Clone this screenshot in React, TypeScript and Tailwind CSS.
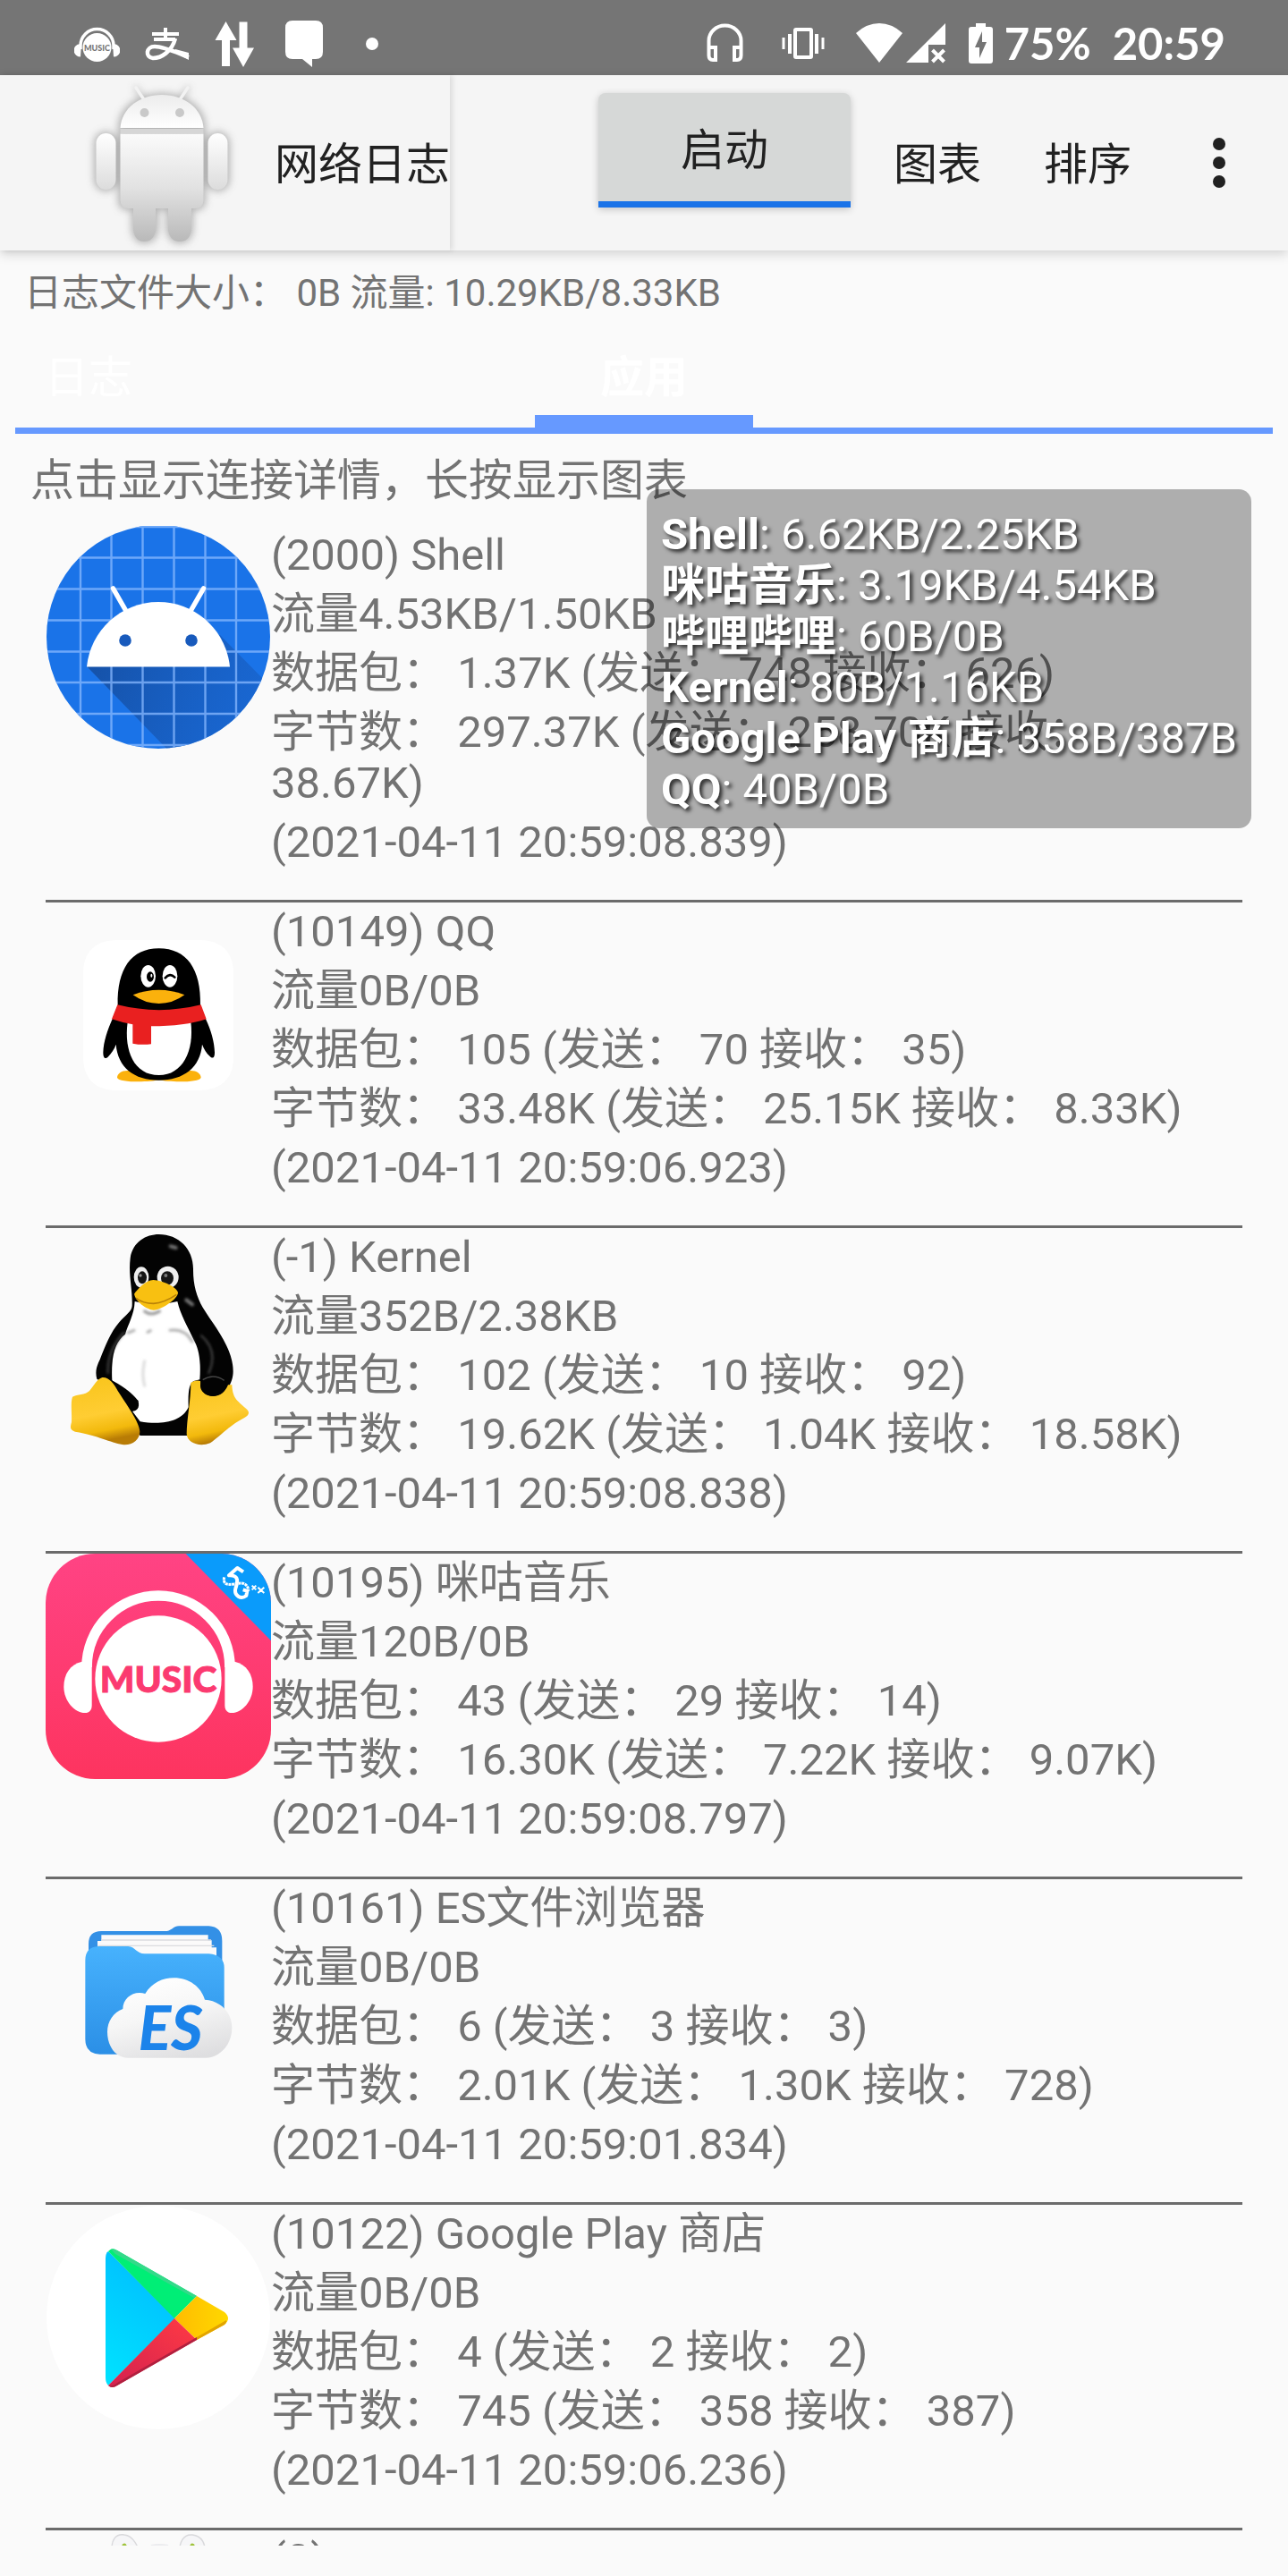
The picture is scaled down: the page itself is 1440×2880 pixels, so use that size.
import React from "react";

const ICON = "block h-[252px] w-[252px]";

function ShellIcon() {
  return (
    <svg viewBox="0 0 252 252" className={ICON} aria-hidden="true">
      <defs>
        <clipPath id="shell-disc">
          <circle cx="126" cy="124" r="125" />
        </clipPath>
        <linearGradient id="shell-shade" x1="60" y1="150" x2="240" y2="230" gradientUnits="userSpaceOnUse">
          <stop offset="0" stopColor="#154fa3" stopOpacity="0.9" />
          <stop offset="1" stopColor="#185fc4" stopOpacity="0.55" />
        </linearGradient>
      </defs>
      <g clipPath="url(#shell-disc)">
        <rect width="252" height="252" fill="#1a73e8" />
        <path d="M46 157L142 256H252V180L195 122Z" fill="url(#shell-shade)" />
        <path
          d="M39 0V252M73.5 0V252M108.5 0V252M143.5 0V252M178.5 0V252M213 0V252M0 1H252M0 35.5H252M0 70.5H252M0 105.5H252M0 140.5H252M0 175H252M0 210H252M0 245H252"
          stroke="#8ab9ff"
          strokeOpacity="0.75"
          strokeWidth="2.4"
        />
      </g>
      <path d="M46 157.500C50 117 84 85 126 85C168 85 202 117 206 157.500Z" fill="#fff" />
      <path d="M75.500 70L91 97M176.500 70L161 97" stroke="#fff" strokeWidth="5.500" strokeLinecap="round" />
      <circle cx="89" cy="128" r="6.800" fill="#185abc" />
      <circle cx="163" cy="128" r="6.800" fill="#185abc" />
    </svg>
  );
}

function QQIcon() {
  return (
    <svg viewBox="153 27 756 756" className={ICON} aria-hidden="true">
      <path
        d="M395 153H667C745 153 783 195 783 265V545C783 615 745 657 667 657H395C317 657 279 615 279 545V265C279 195 317 153 395 153Z"
        fill="#fff"
      />
      <path d="M393 614C393 600 410 589 432 591L535 622C500 630 398 632 393 614ZM674 614C674 600 657 589 635 591L532 622C567 630 669 632 674 614Z" fill="#fbb10c" />
      <path
        d="M395 372C392 250 440 181 533 181C626 181 675 250 672 372L690 418C708 455 719 495 720 530C720 550 712 551 704 543C692 532 684 518 678 503C672 580 616 623 533 623C450 623 395 580 389 503C384 518 374 532 362 545C354 553 346 550 346 530C347 495 360 455 377 418Z"
        fill="#000"
      />
      <path d="M428 428C415 525 450 606 533 606C612 606 652 525 640 428Z" fill="#fff" />
      <path d="M394 370Q533 405 674 370L692 418Q620 442 507 442V502Q475 506 445 500V436Q410 430 375 418Z" fill="#e92020" />
      <ellipse cx="497" cy="274" rx="25" ry="37" fill="#fff" />
      <ellipse cx="570" cy="274" rx="25" ry="37" fill="#fff" />
      <ellipse cx="504" cy="276" rx="12" ry="17" fill="#000" />
      <ellipse cx="508" cy="272" rx="3" ry="6" fill="#fff" />
      <path d="M554 280Q570 262 586 278" fill="none" stroke="#000" strokeWidth="8" strokeLinecap="round" />
      <path d="M446 337Q533 304 619 337Q580 366 533 366Q486 366 446 337Z" fill="#fbb10c" />
    </svg>
  );
}

function KernelIcon() {
  return (
    <svg viewBox="153 39 756 756" className={ICON} aria-hidden="true">
      <defs>
        <linearGradient id="tux-foot" x1="0" y1="0" x2="0.200" y2="1">
          <stop offset="0" stopColor="#f8c41a" />
          <stop offset="0.600" stopColor="#ffcd33" />
          <stop offset="0.850" stopColor="#f2b90c" />
          <stop offset="1" stopColor="#b87c05" />
        </linearGradient>
        <filter id="tux-soft" x="-20%" y="-20%" width="140%" height="140%">
          <feGaussianBlur stdDeviation="5" />
        </filter>
      </defs>
      <path
        d="M533 60C600 60 650 110 648 180C648 230 660 270 680 305C720 370 782 440 782 520C782 540 775 560 765 575L640 735H470L350 560L325 545C318 520 325 500 335 480C355 430 370 390 400 355C420 330 442 320 443 300C445 240 430 200 437 140C445 85 490 60 533 60Z"
        fill="#030303"
      />
      <path
        d="M452 285C450 330 430 360 420 395C385 420 372 470 376 550L464 618L445 655L470 688C540 700 610 690 632 640C630 580 636 560 650 552L670 547C675 480 665 440 650 415C630 370 605 330 595 285L520 300Z"
        fill="#fff"
      />
      <path d="M372 548C400 562 445 590 464 620C470 645 455 655 440 652Z" fill="#030303" />
      <g filter="url(#tux-soft)" fill="none" strokeLinecap="round">
        <path d="M570 382Q620 375 645 420M430 390L450 382M495 388L505 383" stroke="#b0b0b0" strokeWidth="9" />
        <path d="M485 485Q474 530 485 568" stroke="#dcdcdc" strokeWidth="9" />
        <path d="M485 318Q505 335 535 318" stroke="#999" strokeWidth="10" />
        <path d="M625 280L645 295M572 100L590 105" stroke="#777" strokeWidth="12" />
        <path d="M675 400C710 430 725 470 700 525M415 390C380 430 360 470 362 525" stroke="#4a4a4a" strokeWidth="6" />
      </g>
      <ellipse cx="474" cy="204" rx="25" ry="35" fill="#eee" />
      <ellipse cx="563" cy="204" rx="36" ry="37" fill="#eee" />
      <ellipse cx="477" cy="205" rx="15" ry="21" fill="#151515" />
      <ellipse cx="561" cy="207" rx="21" ry="23" fill="#151515" />
      <circle cx="471" cy="198" r="5" fill="#999" />
      <circle cx="556" cy="198" r="6" fill="#777" />
      <path d="M450 260C460 245 490 212 515 213C545 215 590 235 597 255C598 275 545 312 515 314C490 312 455 285 450 260Z" fill="#f8c011" />
      <path d="M456 274Q480 292 515 292Q550 290 592 262" fill="none" stroke="#b98208" strokeWidth="5" />
      <path
        d="M343 540C365 538 382 560 395 585C420 625 469 690 469 722C469 750 440 770 410 765C370 758 330 735 252 722C233 716 236 705 240 690C242 660 236 625 243 605C260 595 285 600 300 585C315 568 325 545 343 540Z"
        fill="url(#tux-foot)"
      />
      <path
        d="M640 558Q655 548 672 552C672 590 690 602 712 602C735 602 755 590 765 565H778C780 615 800 620 831 650C838 660 832 668 820 675C770 700 735 740 705 760C670 775 628 760 626 730C626 680 640 620 640 558Z"
        fill="url(#tux-foot)"
      />
      <ellipse cx="715" cy="568" rx="43" ry="35" fill="#030303" />
      <path d="M680 548Q715 525 752 550" fill="none" stroke="#444" strokeWidth="4" />
    </svg>
  );
}

function MusicIcon() {
  return (
    <svg viewBox="153 51 756 756" className={ICON} role="img" aria-label="MUSIC">
      <defs>
        <linearGradient id="music-bg" x1="0" y1="0" x2="0" y2="1">
          <stop offset="0" stopColor="#ff4384" />
          <stop offset="1" stopColor="#fd345f" />
        </linearGradient>
        <clipPath id="music-clip">
          <rect x="153" y="51" width="756" height="756" rx="166" />
        </clipPath>
      </defs>
      <g clipPath="url(#music-clip)">
        <rect x="153" y="51" width="756" height="756" fill="url(#music-bg)" />
        <path d="M623 51L909 343V51Z" fill="#0a9bfb" />
      </g>
      <path d="M291 432A240 240 0 0 1 771 432" fill="none" stroke="#fff" strokeWidth="35" />
      <path d="M275 413C235 422 214 455 214 497C214 545 250 585 285 585C300 585 308 575 308 560V410Z" fill="#fff" />
      <path d="M787 413C827 422 848 455 848 497C848 545 812 585 777 585C762 585 754 575 754 560V410Z" fill="#fff" />
      <circle cx="531" cy="471" r="212" fill="#fff" />
      <text x="531" y="516" textAnchor="middle" fontFamily="Lato, sans-serif" fontWeight="900" fontSize="122" fill="#fb3a70" stroke="#fb3a70" strokeWidth="3">
        MUSIC
      </text>
      <g fill="none" stroke="#fff" strokeLinejoin="round">
        <path d="M816 112L796 99L768 124C805 122 796 150 790 168C784 192 808 206 826 192L829 176L815 172" strokeWidth="12" />
        <path d="M752 130C744 168 788 150 808 150C824 150 834 162 833 176" strokeWidth="9" strokeDasharray="9 2" />
        <path d="M845 158L859 172M859 158L845 172M865 164L886 183M886 164L865 183" strokeWidth="6" />
      </g>
    </svg>
  );
}

function FilesIcon() {
  return (
    <svg viewBox="153 3 756 756" className={ICON} role="img" aria-label="ES">
      <defs>
        <linearGradient id="es-front" x1="0" y1="0" x2="0" y2="1">
          <stop offset="0" stopColor="#47b2fd" />
          <stop offset="1" stopColor="#2b8fe6" />
        </linearGradient>
        <linearGradient id="es-cloud" x1="0.300" y1="0" x2="0.700" y2="1">
          <stop offset="0" stopColor="#fff" />
          <stop offset="0.450" stopColor="#f6f6f6" />
          <stop offset="1" stopColor="#dedee0" />
        </linearGradient>
      </defs>
      <path d="M340 177H560C578 174 582 160 600 160H700Q745 162 745 210V320H297V220Q297 177 340 177Z" fill="#3390e6" />
      <path d="M340 190H698V208H710V232H726V300H327V210H340Z" fill="#fbfafa" />
      <path d="M340 207H708M328 226H718" stroke="#dcdcdf" strokeWidth="4" />
      <path d="M330 228H430C455 230 458 253 485 253H700Q752 258 752 300V540Q752 590 710 590H335Q286 588 286 540V275Q286 230 330 228Z" fill="url(#es-front)" />
      <path
        d="M430 602C385 602 360 560 360 515C360 480 380 450 412 438C412 400 450 375 487 387C510 350 545 334 583 334C635 334 675 365 687 407C740 410 778 450 778 502C778 560 735 602 690 602Z"
        fill="url(#es-cloud)"
      />
      <text x="572" y="575" textAnchor="middle" fontFamily="Lato, sans-serif" fontStyle="italic" fontWeight="900" fontSize="204" fill="#1b83ea">
        ES
      </text>
    </svg>
  );
}

function PlayIcon() {
  return (
    <svg viewBox="0 0 252 252" className={ICON} aria-hidden="true">
      <defs>
        <linearGradient id="play-blue" x1="0.600" y1="0" x2="0.200" y2="1">
          <stop offset="0" stopColor="#00bdff" />
          <stop offset="1" stopColor="#00e1ff" />
        </linearGradient>
        <linearGradient id="play-red" x1="1" y1="0" x2="0" y2="1">
          <stop offset="0" stopColor="#ff3a44" />
          <stop offset="1" stopColor="#d3214f" />
        </linearGradient>
        <linearGradient id="play-yellow" x1="1" y1="0" x2="0" y2="0">
          <stop offset="0" stopColor="#ffd800" />
          <stop offset="1" stopColor="#ffbc00" />
        </linearGradient>
      </defs>
      <circle cx="126" cy="126" r="125" fill="#fff" />
      <path d="M70 52Q67 54 67 60V193Q67 199 70 202L145 127Z" fill="url(#play-blue)" />
      <path d="M70 52Q74 47 80 51L169 102L144 127Z" fill="#00ee76" />
      <path d="M73 49.500Q76 48.500 80 51L169 102L166 104L78 55Z" fill="#35d98a" />
      <path d="M169 102L200 120Q208 127 200 134L169 151L144 127Z" fill="url(#play-yellow)" />
      <path d="M144 127L169 151L80 202Q74 206 70 202Z" fill="url(#play-red)" />
      <path d="M169 148V151L80 202Q74 206 70 202Q76 203 80 199Z" fill="#b0203f" />
      <path d="M169 151V148L202 129Q203 131 200 134Z" fill="#e2a400" />
    </svg>
  );
}

function RootIcon() {
  return (
    <svg viewBox="0 0 252 252" className={ICON} aria-hidden="true">
      <g fill="#f6f6f8" stroke="#d9d9dc" strokeWidth="1.500">
        <path d="M75 30C71 8 80 4 88 5C98 6 104 18 106 30Z" />
        <path d="M150 30C148 12 155 4 164 5C174 6 180 14 178 30Z" />
      </g>
      <path d="M88 17L96 40M164 17L156 40" stroke="#9fc33b" strokeWidth="5" strokeLinecap="round" />
      <path d="M118 17Q127 15 137 17" stroke="#ebebee" strokeWidth="2" fill="none" />
    </svg>
  );
}

function RobotLogo() {
  return (
    <svg viewBox="83 84 196 196" className="block h-[196px] w-[196px]" aria-hidden="true">
      <defs>
        <linearGradient id="robot-metal" x1="0" y1="149" x2="0" y2="270" gradientUnits="userSpaceOnUse">
          <stop offset="0" stopColor="#fbfbfb" />
          <stop offset="0.500" stopColor="#e2e2e2" />
          <stop offset="1" stopColor="#b9b9b9" />
        </linearGradient>
        <linearGradient id="robot-arm" x1="0" y1="149" x2="0" y2="212" gradientUnits="userSpaceOnUse">
          <stop offset="0" stopColor="#fff" />
          <stop offset="1" stopColor="#dcdcdc" />
        </linearGradient>
        <linearGradient id="robot-head" x1="0" y1="106" x2="0" y2="143" gradientUnits="userSpaceOnUse">
          <stop offset="0" stopColor="#ececec" />
          <stop offset="1" stopColor="#fff" />
        </linearGradient>
        <filter id="robot-glow" x="-20%" y="-20%" width="140%" height="140%">
          <feGaussianBlur stdDeviation="4.500" />
        </filter>
      </defs>
      <g filter="url(#robot-glow)" fill="#a9a9a9" stroke="#a9a9a9" strokeWidth="4" opacity="0.850">
        <path d="M134 144C134 121 155 106 181 106C207 106 228 121 228 144V225Q228 233 219 233H143Q134 233 134 225Z" />
        <rect x="107" y="149" width="23" height="63" rx="11.500" />
        <rect x="232" y="149" width="23" height="63" rx="11.500" />
        <path d="M149 230V257Q151 270 161 270Q173 270 175 257V230ZM188 230V257Q190 270 201 270Q212 270 214 257V230ZM151 97L161 112M211 97L201 112" />
      </g>
      <path d="M152 98L162 113M210 98L200 113" stroke="#f2f2f2" strokeWidth="3.500" strokeLinecap="round" />
      <path d="M134.500 143C136 121 156 106 181 106C206 106 226 121 227.500 143Z" fill="url(#robot-head)" />
      <path d="M134.500 144H227.500V149H134.500Z" fill="#d6d6d6" />
      <path
        d="M134.500 149.500H227.500V224Q227 233 218 233H214V257Q212 270 201 270Q190 270 188 257V233H174V257Q172 270 161 270Q151 270 149 257V233H144Q135 233 134.500 224Z"
        fill="url(#robot-metal)"
      />
      <rect x="107.500" y="149" width="22" height="63" rx="11" fill="url(#robot-arm)" />
      <rect x="232.500" y="149" width="22" height="63" rx="11" fill="url(#robot-arm)" />
      <circle cx="161.500" cy="126" r="5" fill="#c9c9c9" />
      <circle cx="201" cy="126" r="5" fill="#c9c9c9" />
    </svg>
  );
}

function StatusBar() {
  return (
    <div className="flex h-[84px] shrink-0 items-center bg-[#757575] pr-[70px] pl-[83px] text-white">
      <div className="flex gap-7">
        <svg viewBox="83 0 51 84" className="h-[84px] w-[51px]" role="img" aria-label="MUSIC">
          <path d="M90 55V51A18.500 18.500 0 0 1 127 51V55" fill="none" stroke="#fff" strokeWidth="3.500" />
          <path d="M91 49C80 49 80 63 90 63.500ZM126 49C137 49 137 63 127 63.500Z" fill="#fff" />
          <circle cx="108.500" cy="53" r="16" fill="#fff" />
          <text x="108.500" y="56.500" textAnchor="middle" fontFamily="Lato, sans-serif" fontWeight="900" fontSize="9" fill="#757575">
            MUSIC
          </text>
        </svg>
        <svg viewBox="162 0 50 84" className="h-[84px] w-[50px]" fill="none" stroke="#fff" aria-hidden="true">
          <path d="M170 38H200M172 44H196M185 31V44" strokeWidth="4" />
          <path d="M196 43C192 58 180 65 171 65C162 64 163 52 173 52C184 52 200 60 211 64" strokeWidth="4.500" />
          <path d="M196 55L211 59V67L196 59Z" fill="#fff" stroke="none" />
        </svg>
        <svg viewBox="240 0 50 84" className="h-[84px] w-[50px]" fill="#fff" aria-hidden="true">
          <path d="M252.500 24L264.500 45H257V74H248V45H240.500ZM272 75L260 53.500H267.500V24.500H276.500V53.500H284Z" />
        </svg>
        <svg viewBox="318 0 44 84" className="h-[84px] w-[44px]" fill="#fff" aria-hidden="true">
          <path d="M327 23H353Q361 23 361 31V58Q361 66 353 66H349V75L338 66H327Q319 66 319 58V31Q319 23 327 23Z" />
        </svg>
        <svg viewBox="390 0 52 84" className="h-[84px] w-[52px]" fill="#fff" aria-hidden="true">
          <circle cx="416" cy="49" r="7" />
        </svg>
      </div>
      <div className="ml-auto flex items-center">
        <svg viewBox="790 0 44 84" className="mr-10 h-[84px] w-[44px]" fill="none" stroke="#fff" strokeWidth="4" aria-hidden="true">
          <path d="M801 53H793.500V62Q793.500 67 798 67H801ZM822 53H829.500V62Q829.500 67 825 67H822ZM793.500 54V45.500A18 17 0 0 1 829.500 45.500V54" />
        </svg>
        <svg viewBox="874 0 50 84" className="mr-8 h-[84px] w-[50px]" fill="none" stroke="#fff" strokeWidth="4" aria-hidden="true">
          <rect x="890" y="33" width="18" height="31" rx="1" />
          <path d="M884 38V60M914 38V60" />
          <path d="M877 42V55M921 42V55" strokeWidth="3" />
        </svg>
        <svg viewBox="956 0 104 84" className="mr-6 h-[84px] w-[104px]" fill="#fff" aria-hidden="true">
          <path d="M984 70L958 37Q970 26 984 26Q998 26 1010 37Z" />
          <path d="M1058 26V50H1039V70H1014Z" />
          <path d="M1043.500 56L1056.500 69M1056.500 56L1043.500 69" stroke="#fff" strokeWidth="4" />
        </svg>
        <svg viewBox="1083 0 28 84" className="mr-3 h-[84px] w-[28px]" aria-hidden="true">
          <path d="M1091 26H1102V30H1107Q1110 30 1110 33V68Q1110 71 1107 71H1086Q1083 71 1083 68V33Q1083 30 1086 30H1091Z" fill="#fff" />
          <path d="M1098 35L1090 53H1095V65L1103 47H1098Z" fill="#757575" />
        </svg>
        <div className="flex gap-6 pt-3 font-['Lato',sans-serif] text-[49px] leading-[57px] font-bold">
          <span>75%</span>
          <span>20:59</span>
        </div>
      </div>
    </div>
  );
}

function AppBar() {
  return (
    <header className="relative z-10 flex h-[196px] shrink-0 items-center bg-[#f5f5f5] text-[49px] leading-[57px] text-[#212121] shadow-[0_4px_12px_rgba(0,0,0,0.16)]">
      <div className="flex h-full w-[503px] items-center bg-[#f5f5f5] pl-[83px] shadow-[3px_0_6px_rgba(0,0,0,0.1)]">
        <RobotLogo />
        <h1 className="ml-7 pt-1 whitespace-nowrap">网络日志</h1>
      </div>
      <div className="ml-auto flex h-full items-center pr-[53px]">
        <button
          type="button"
          className="mt-5 mr-12 h-[128px] w-[282px] self-start rounded-t-[8px] border-b-[7px] border-[#1a73e8] bg-[#d6d8d7] pt-2 shadow-[0_2px_8px_rgba(0,0,0,0.2)]"
        >
          启动
        </button>
        <button type="button" className="mr-[70px] pt-1">图表</button>
        <button type="button" className="mr-[74px] pt-1">排序</button>
        <button type="button" aria-label="更多选项" className="flex w-12 flex-col items-center gap-[7px]">
          <span className="size-[14px] rounded-full bg-[#212121]" />
          <span className="size-[14px] rounded-full bg-[#212121]" />
          <span className="size-[14px] rounded-full bg-[#212121]" />
        </button>
      </div>
    </header>
  );
}

type AppEntry = { id: string; name: string; Icon: () => React.ReactElement; lines: string[] };

const apps: AppEntry[] = [
  {
    id: "2000",
    name: "Shell",
    Icon: ShellIcon,
    lines: ["流量4.53KB/1.50KB", "数据包： 1.37K (发送： 748 接收： 626)", "字节数： 297.37K (发送： 258.70K 接收： 38.67K)", "(2021-04-11 20:59:08.839)"],
  },
  {
    id: "10149",
    name: "QQ",
    Icon: QQIcon,
    lines: ["流量0B/0B", "数据包： 105 (发送： 70 接收： 35)", "字节数： 33.48K (发送： 25.15K 接收： 8.33K)", "(2021-04-11 20:59:06.923)"],
  },
  {
    id: "-1",
    name: "Kernel",
    Icon: KernelIcon,
    lines: ["流量352B/2.38KB", "数据包： 102 (发送： 10 接收： 92)", "字节数： 19.62K (发送： 1.04K 接收： 18.58K)", "(2021-04-11 20:59:08.838)"],
  },
  {
    id: "10195",
    name: "咪咕音乐",
    Icon: MusicIcon,
    lines: ["流量120B/0B", "数据包： 43 (发送： 29 接收： 14)", "字节数： 16.30K (发送： 7.22K 接收： 9.07K)", "(2021-04-11 20:59:08.797)"],
  },
  {
    id: "10161",
    name: "ES文件浏览器",
    Icon: FilesIcon,
    lines: ["流量0B/0B", "数据包： 6 (发送： 3 接收： 3)", "字节数： 2.01K (发送： 1.30K 接收： 728)", "(2021-04-11 20:59:01.834)"],
  },
  {
    id: "10122",
    name: "Google Play 商店",
    Icon: PlayIcon,
    lines: ["流量0B/0B", "数据包： 4 (发送： 2 接收： 2)", "字节数： 745 (发送： 358 接收： 387)", "(2021-04-11 20:59:06.236)"],
  },
  { id: "0", name: "root", Icon: RootIcon, lines: [] },
];

const traffic = [
  ["Shell", "6.62KB/2.25KB"],
  ["咪咕音乐", "3.19KB/4.54KB"],
  ["哔哩哔哩", "60B/0B"],
  ["Kernel", "80B/1.16KB"],
  ["Google Play 商店", "358B/387B"],
  ["QQ", "40B/0B"],
];

function AppRow({ app }: { app: AppEntry }) {
  const { Icon } = app;
  return (
    <li className="flex border-b-[3px] border-[#6b6b6b] pb-[31px]">
      <div className="h-[252px] w-[252px] shrink-0">
        <Icon />
      </div>
      <div className="min-w-0 flex-1">
        {[`(${app.id}) ${app.name}`, ...app.lines].map((line) => (
          <p key={line} className="pt-1 pb-[5px]">
            {line}
          </p>
        ))}
      </div>
    </li>
  );
}

export default function App() {
  return (
    <div
      lang="zh-CN"
      className="relative flex h-screen flex-col overflow-hidden bg-[#fafafa] pb-[34px] font-['Roboto','Noto_Sans_CJK_SC',sans-serif] text-[49px] leading-[57px] text-[#737373]"
    >
      <StatusBar />
      <AppBar />
      <p className="shrink-0 px-[27px] pt-[23px] text-[42px] leading-[49px]">日志文件大小： 0B 流量: 10.29KB/8.33KB</p>
      <nav role="tablist" className="mx-[17px] grid h-[133px] shrink-0 grid-cols-3 border-b-[7px] border-[#6699ff] text-white">
        <button type="button" role="tab" aria-selected="false" className="flex items-start pt-[42px] pl-[33px]">
          日志
        </button>
        <button
          type="button"
          role="tab"
          aria-selected="true"
          className="flex w-[244px] items-start justify-center justify-self-center border-b-[14px] border-[#6699ff] pt-[42px] font-bold"
        >
          应用
        </button>
      </nav>
      <main className="min-h-0 flex-1 overflow-hidden pt-6">
        <p className="px-[34px]">点击显示连接详情，长按显示图表</p>
        <ul className="mx-[51px] mt-[22px]">
          {apps.map((app) => (
            <AppRow key={app.id} app={app} />
          ))}
        </ul>
      </main>
      <aside className="absolute top-[547px] right-[41px] rounded-[14px] bg-black/30 px-4 pt-[22px] pb-[15px] whitespace-nowrap text-white [text-shadow:3px_3px_4px_rgba(0,0,0,0.75)]">
        {traffic.map(([name, value]) => (
          <p key={name}>
            <b>{name}</b>: {value}
          </p>
        ))}
      </aside>
    </div>
  );
}
